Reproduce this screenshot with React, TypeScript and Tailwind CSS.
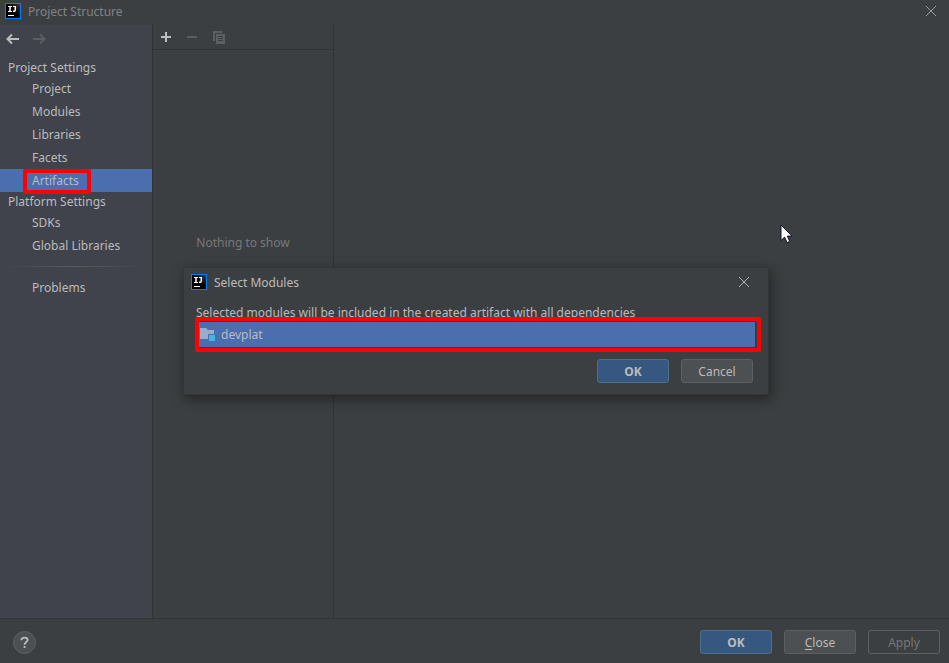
import { useState } from 'react';
import type { ReactNode } from 'react';
import clsx from 'clsx';

const sections = [
  { title: 'Project Settings', items: ['Project', 'Modules', 'Libraries', 'Facets', 'Artifacts'] },
  { title: 'Platform Settings', items: ['SDKs', 'Global Libraries'] },
];

/* ------------------------------------------------------------------ */
/* Icons                                                               */
/* ------------------------------------------------------------------ */
function IdeaLogo() {
  return (
    <svg width="16" height="16" viewBox="0 0 16 16" aria-hidden>
      <defs>
        <linearGradient id="logo" x1="0" y1="1" x2="1" y2="0">
          <stop offset="0.5" stopColor="#000" />
          <stop offset="1" stopColor="#3a3a3a" />
        </linearGradient>
      </defs>
      <rect width="16" height="16" fill="#087cfa" />
      <rect x="1" y="1" width="14" height="14" fill="url(#logo)" />
      <path d="M3 3.500h4M3 8.500h4M8 3.500h2" stroke="#fff" fill="none" />
      <path d="M5 3v6M10.300 3v3.800c0 1.200-.6 1.600-2.300 1.500" stroke="#fff" strokeWidth="1.500" fill="none" />
      <rect x="3" y="12" width="6" height="1" fill="#fff" />
    </svg>
  );
}

function Arrow({ flip = false }: { flip?: boolean }) {
  return (
    <svg width="14" height="12" viewBox="0 0 14 12" fill="none" stroke="currentColor" strokeWidth="2" aria-hidden>
      {flip ? <path d="M0 6h12M7 1.500 11.500 6 7 10.500" /> : <path d="M13 6H1M6 1.500 1.500 6 6 10.500" />}
    </svg>
  );
}

function CloseIcon() {
  return (
    <svg width="12" height="12" viewBox="0 0 12 12" stroke="currentColor" aria-hidden>
      <path d="m1 1 10 10M11 1 1 11" />
    </svg>
  );
}

function CopyIcon() {
  return (
    <svg width="12" height="13" viewBox="0 0 12 13" fill="currentColor" aria-hidden>
      <path d="M0 0h9v2H2v8H0z" />
      <path fillRule="evenodd" d="M3 3h9v10H3zM5 5v1h5V5zM5 7v1h5V7zM5 9v1h5V9z" />
    </svg>
  );
}

function ModuleIcon() {
  return (
    <svg width="16" height="16" viewBox="0 0 16 16" aria-hidden>
      <path d="M0 2h6l2 2h6v4H8v5H0z" fill="#9aacc9" />
      <rect x="9" y="9" width="6" height="6" fill="#40b6e0" />
    </svg>
  );
}

/* ------------------------------------------------------------------ */
/* Buttons                                                             */
/* ------------------------------------------------------------------ */
function DialogButton({
  children,
  variant = 'default',
}: {
  children: ReactNode;
  variant?: 'default' | 'primary' | 'disabled';
}) {
  return (
    <button
      type="button"
      disabled={variant === 'disabled'}
      className={clsx(
        'flex h-6 w-18 items-center justify-center rounded-[3px] border pt-0.5',
        variant === 'primary' && 'border-[#4c708c] bg-[#365880] font-bold',
        variant === 'default' && 'border-[#5e6060] bg-[#4c5052]',
        variant === 'disabled' && 'border-[#5e6060] text-[#777777]',
      )}
    >
      {children}
    </button>
  );
}

function NavItem({ label, selected, onSelect }: { label: string; selected: boolean; onSelect: () => void }) {
  return (
    <li className={clsx('relative', selected && 'bg-[#4b6eaf]')}>
      <button type="button" onClick={onSelect} className="block h-[23px] w-full pl-8 text-left">
        {label}
      </button>
      {selected && (
        <span className="pointer-events-none absolute top-0 left-[23px] h-[25px] w-[68px] rounded-xs border-4 border-[#ff0000]" />
      )}
    </li>
  );
}

/* ------------------------------------------------------------------ */
/* Select Modules dialog                                               */
/* ------------------------------------------------------------------ */
function SelectModules() {
  return (
    <div className="pointer-events-none absolute inset-0 flex items-center justify-center pb-0.5 pl-[3px]">
      <div
        role="dialog"
        aria-labelledby="modules-title"
        className="pointer-events-auto w-[586px] max-w-full border border-[#333536] bg-[#3c3f41] shadow-[2px_4px_12px_rgba(0,0,0,0.45)]"
      >
        <header className="flex h-[29px] items-center gap-[7px] pr-[18px] pl-[7px]">
          <IdeaLogo />
          <h2 id="modules-title" className="flex-1 pt-0.5">Select Modules</h2>
          <button type="button" aria-label="Close dialog" className="text-[#afb1b3]">
            <CloseIcon />
          </button>
        </header>
        <div className="px-3 pt-1.5 pb-[11px]">
          <p id="modules-hint" className="h-[18px] whitespace-nowrap">
            Selected modules will be included in the created artifact with all dependencies
          </p>
          <div className="relative">
            <ul role="listbox" aria-labelledby="modules-hint" className="border border-[#2f3a4f]">
              <li role="option" aria-selected="true" className="flex h-[25px] items-center gap-[5px] bg-[#4b6eaf] pl-[3px]">
                <ModuleIcon />
                <span className="pt-0.5">devplat</span>
              </li>
            </ul>
            <span className="pointer-events-none absolute -top-1 -right-[5px] -bottom-1 -left-px rounded-xs border-4 border-[#ff0000]" />
          </div>
          <div className="flex justify-end gap-3 pt-[11px] pr-[3px]">
            <DialogButton variant="primary">OK</DialogButton>
            <DialogButton>Cancel</DialogButton>
          </div>
        </div>
      </div>
    </div>
  );
}

export default function App() {
  const [selected, setSelected] = useState('Artifacts');

  return (
    <div className="relative flex min-h-screen flex-col bg-[#3c3f41] font-['Noto_Sans',sans-serif] text-xs leading-5 text-[#bbbbbb]">
      <header className="flex h-[25px] items-center gap-[7px] pr-3 pb-[3px] pl-[5px] text-[#808284]">
        <IdeaLogo />
        <h1 className="flex-1 pt-0.5">Project Structure</h1>
        <button type="button" aria-label="Close window" className="text-[#9a9c9e]">
          <CloseIcon />
        </button>
      </header>

      <main className="flex flex-1">
        <nav className="w-[153px] shrink-0 border-r border-[#323334] bg-[#40434c]">
          <div className="flex h-[33px] gap-[13px] pt-2 pl-1.5">
            <button type="button" aria-label="Back" className="h-3 text-[#bbbdbf]">
              <Arrow />
            </button>
            <button type="button" aria-label="Forward" disabled className="h-3 text-[#5b5d61]">
              <Arrow flip />
            </button>
          </div>
          {sections.map((section) => (
            <section key={section.title}>
              <h2 className="h-[19px] pl-2">{section.title}</h2>
              <ul>
                {section.items.map((item) => (
                  <NavItem key={item} label={item} selected={selected === item} onSelect={() => setSelected(item)} />
                ))}
              </ul>
            </section>
          ))}
          <hr className="my-[9px] mr-2 ml-1 h-px border-0 bg-linear-to-r from-transparent via-[#5c5c5c] to-transparent" />
          <ul>
            <NavItem label="Problems" selected={selected === 'Problems'} onSelect={() => setSelected('Problems')} />
          </ul>
        </nav>

        <section className="w-[181px] shrink-0 border-r border-[#323334]">
          <div className="flex h-[25px] items-center gap-4 border-b border-[#323334] pl-2">
            <button type="button" aria-label="Add" className="text-[#bbbdbf]">
              <svg width="10" height="10" stroke="currentColor" strokeWidth="2" aria-hidden>
                <path d="M0 5h10M5 0v10" />
              </svg>
            </button>
            <button type="button" aria-label="Remove" disabled className="text-[#5d6062]">
              <svg width="10" height="10" stroke="currentColor" strokeWidth="2" aria-hidden>
                <path d="M0 5h10" />
              </svg>
            </button>
            <button type="button" aria-label="Copy" disabled className="text-[#5d6062]">
              <CopyIcon />
            </button>
          </div>
          <p className="pt-[183px] text-center text-[#787878]">Nothing to show</p>
        </section>
      </main>

      <footer className="flex h-[45px] items-center justify-between border-t border-[#323334] pt-0.5 pr-[9px] pl-[13px]">
        <button
          type="button"
          aria-label="Help"
          className="flex size-[23px] items-center justify-center rounded-full border border-[#5e6060] bg-[#4c5052]"
        >
          <svg width="9" height="13" viewBox="0 0 10 13" fill="none" stroke="currentColor" strokeWidth="2" aria-hidden>
            <path d="M1.500 4C1.500 2 3 1 5 1s3.500 1 3.500 2.800C8.500 6 5 6 5 9M5 10.500v2" />
          </svg>
        </button>
        <div className="flex gap-3">
          <DialogButton variant="primary">OK</DialogButton>
          <DialogButton>
            <span>
              <span className="underline underline-offset-2">C</span>lose
            </span>
          </DialogButton>
          <DialogButton variant="disabled">Apply</DialogButton>
        </div>
      </footer>

      <SelectModules />

      {/* Mouse pointer */}
      <svg className="pointer-events-none absolute top-[224px] left-[780px]" width="13" height="20" viewBox="0 0 13 20" aria-hidden>
        <path d="M1 1v15.500l3.600-3.400 2.500 5.500 2.600-1.200-2.400-5.300h4.700z" fill="#fff" stroke="#11132a" />
      </svg>
    </div>
  );
}
